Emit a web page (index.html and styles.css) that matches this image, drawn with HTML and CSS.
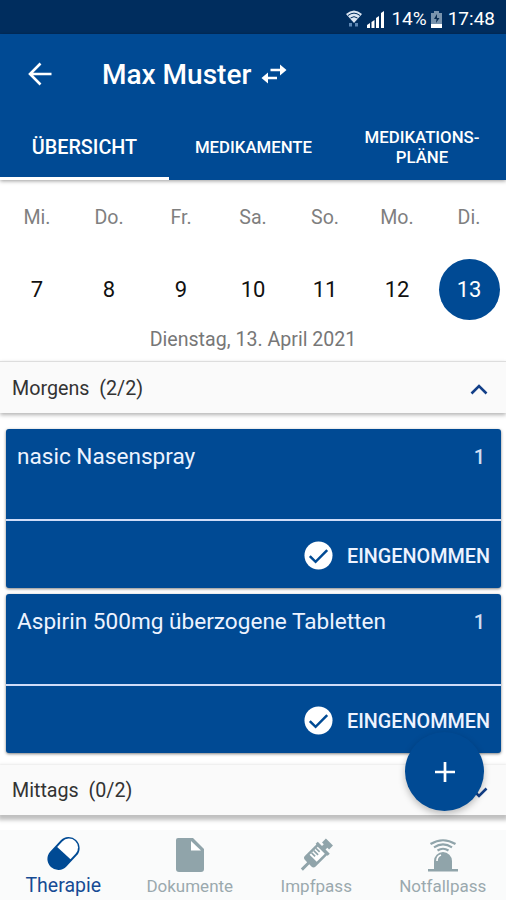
FILE: index.html
```html
<!DOCTYPE html>
<html lang="de">
<head>
<meta charset="utf-8">
<title>Therapie</title>
<link rel="stylesheet" href="styles.css">
</head>
<body>
<div class="app">
  <div class="status">
    <svg class="wifi" width="16" height="19" viewBox="0 0 16 19"><path d="M0 4Q8-3 16 4L8 13Z" fill="#dce6f2"/><path d="M2 5.500Q8 .8 14 5.500M4.500 8Q8 5.300 11.500 8" fill="none" stroke="#002d5e" stroke-width="1"/><path d="M3 13h3v3.500H3zM9 13h3v3.500H9z" fill="#5c86b3"/></svg>
    <svg class="signal" width="18" height="17" viewBox="0 0 18 17"><path d="M0 17v-3l3-2v5zM4.500 17v-6l3-2v8zM9 17V7l3-2v12zM14 17V2l3-2v17z" fill="#fff"/></svg>
    <span class="battery-text">14%</span>
    <svg class="battery" width="11" height="17" viewBox="0 0 11 17"><path d="M3 0h5v2h3v15H0V2h3z" fill="#7893ad"/><path d="M0 13h11v4H0z" fill="#fff"/><path d="M6 3 3 8h2.500L5 12l3.500-5H6z" fill="#082b50"/></svg>
    <span class="clock">17:48</span>
  </div>
  <header class="header">
    <div class="bar">
      <svg class="back" width="24" height="24" viewBox="0 0 24 24"><path d="M23.500 12H2M12.500 1.500 2 12l10.500 10.500" fill="none" stroke="#fff" stroke-width="2.600"/></svg>
      <h1>Max Muster</h1>
      <svg class="swap" width="26" height="20" viewBox="0 0 26 20"><path d="M9.500 6H20M16 14H6" fill="none" stroke="#fff" stroke-width="2.500"/><path d="m19 .5 6.500 5.500-6.500 5.500zM7 8.500v11L.500 14z" fill="#fff"/></svg>
    </div>
    <nav class="tabs">
      <div class="tab active"><span>ÜBERSICHT</span></div>
      <div class="tab"><span>MEDIKAMENTE</span></div>
      <div class="tab"><span>MEDIKATIONS-<br>PLÄNE</span></div>
    </nav>
  </header>
  <section class="calendar">
    <div class="week names"><span>Mi.</span><span>Do.</span><span>Fr.</span><span>Sa.</span><span>So.</span><span>Mo.</span><span>Di.</span></div>
    <div class="week days"><span>7</span><span>8</span><span>9</span><span>10</span><span>11</span><span>12</span><span class="today">13</span></div>
    <div class="date"><span>Dienstag, 13. April 2021</span></div>
  </section>
  <div class="group morning">
    <span>Morgens&nbsp; (2/2)</span>
    <svg width="18" height="12" viewBox="0 0 18 12"><path d="m1.500 11.500 7.500-7.500 7.500 7.500" fill="none" stroke="#123f88" stroke-width="2.600"/></svg>
  </div>
  <main class="cards">
    <article class="card">
      <div class="med"><span>nasic Nasenspray</span><span class="amount">1</span></div>
      <div class="taken"><svg width="29" height="29" viewBox="0 0 30 30"><circle cx="15" cy="14" r="14.500" fill="#fff"/><path d="m6 14.500 6 6L24 8.500" fill="none" stroke="#004a94" stroke-width="2.600"/></svg><span>EINGENOMMEN</span></div>
    </article>
    <article class="card">
      <div class="med"><span>Aspirin 500mg überzogene Tabletten</span><span class="amount">1</span></div>
      <div class="taken"><svg width="29" height="29" viewBox="0 0 30 30"><circle cx="15" cy="14" r="14.500" fill="#fff"/><path d="m6 14.500 6 6L24 8.500" fill="none" stroke="#004a94" stroke-width="2.600"/></svg><span>EINGENOMMEN</span></div>
    </article>
  </main>
  <div class="group noon">
    <span>Mittags&nbsp; (0/2)</span>
    <svg width="18" height="12" viewBox="0 0 18 12"><path d="m1.500 3.500 7.500 7.500 7.500-7.500" fill="none" stroke="#123f88" stroke-width="2.600"/></svg>
    <div class="fab"><svg width="22" height="22" viewBox="0 0 22 22"><path d="M11 1v20M1 11h20" stroke="#fff" stroke-width="2.700"/></svg></div>
  </div>
  <nav class="bottom">
    <div class="item on">
      <svg width="36" height="36" viewBox="0 0 36 36"><g transform="translate(.5 -1.500) rotate(-47 18 18)"><rect x="-.5" y="7" width="37" height="22" rx="11" fill="#004a94"/><path d="M18.500 8.900h7.500a9.100 9.100 0 0 1 0 18.200h-7.500z" fill="#fff"/></g></svg>
      <span>Therapie</span>
    </div>
    <div class="item">
      <svg width="36" height="36" viewBox="0 0 36 36"><path d="M6 1h15l11 11v20a3 3 0 0 1-3 3H7a3 3 0 0 1-3-3V3a2 2 0 0 1 2-2z" fill="#90a4aa"/><path d="M19 4v9.500h10z" fill="#fff"/></svg>
      <span>Dokumente</span>
    </div>
    <div class="item">
      <svg width="36" height="36" viewBox="0 0 36 36"><g transform="translate(0 .5) rotate(45 18 18)" fill="#90a4aa"><path d="M13-1h10v5.500h-2.500V7h6v3H25.500V26q0 3-3 3h-3v9h-3v-9H13.500q-3 0-3-3V10H9.500V7h6V4.500H13z"/><path d="M13 10.500h10v11.500H13z" fill="#fff"/><path d="M13 12h5v1.700h-5zM13 15.200h6v1.700h-6zM13 18.400h5v1.700h-5z"/></g></svg>
      <span>Impfpass</span>
    </div>
    <div class="item">
      <svg width="36" height="36" viewBox="0 0 36 36"><path d="M9 32V24a9 9 0 0 1 18 0v8h6v2.500H3V32z" fill="#90a4aa"/><path d="M12 24a6 6 0 0 1 4-6" stroke="#fff" stroke-width="1.600" fill="none"/><path d="M5.500 7Q18-.5 30.500 7M9 10.300Q18 4.500 27 10.300M12.500 13.500Q18 10 23.500 13.500" fill="none" stroke="#90a4aa" stroke-width="2.200"/></svg>
      <span>Notfallpass</span>
    </div>
  </nav>
</div>
</body>
</html>
```
FILE: styles.css
```css
* { box-sizing: border-box; }
body { margin: 0; background: #fff; font-family: Roboto, "Liberation Sans", sans-serif; }
.app { width: 506px; height: 900px; display: flex; flex-direction: column; overflow: hidden; white-space: nowrap; }
svg { display: block; flex: none; overflow: visible; }
.status { height: 34px; background: #002d5e; color: #fff; display: flex; align-items: center; justify-content: flex-end; padding: 4px 11px 0 0; font-size: 19px; line-height: 28px; flex: none; }
.wifi { margin-right: 5px; }
.signal { margin-right: 6px; }
.battery { margin: 0 6px 0 4px; }
.header { height: 146px; background: #004a94; color: #fff; flex: none; display: flex; flex-direction: column; box-shadow: 0 1px 4px rgba(0,0,0,.4); }
.bar { height: 80px; display: flex; align-items: center; padding-left: 28px; }
h1 { margin: 1px 10px 0 50px; font-size: 28px; font-weight: 500; line-height: 36px; }
.tabs { height: 66px; display: grid; grid-template-columns: 169px 169px 168px; font-weight: 500; text-align: center; }
.tab { display: flex; align-items: center; justify-content: center; padding-top: 3px; border-bottom: 3px solid transparent; font-size: 16.800px; line-height: 20px; }
.tab.active { border-color: #fff; font-size: 19.800px; padding-top: 5px; }
.calendar { height: 181px; flex: none; }
.week { display: grid; grid-template-columns: repeat(7, 72px); padding-left: 1px; text-align: center; justify-items: center; align-items: center; }
.names { height: 74px; color: #7f7f7f; font-size: 19.600px; padding-top: 1px; }
.days { height: 70px; color: #111; font-size: 22px; }
.days .today { width: 61px; height: 61px; line-height: 61px; border-radius: 50%; background: #004a94; color: #fff; }
.date { height: 32px; line-height: 32px; color: #777; text-align: center; font-size: 19.600px; }
.group { background: #fafafa; display: flex; justify-content: space-between; align-items: center; padding: 1px 18px 0 12px; color: #333; font-size: 19.700px; flex: none; position: relative; }
.morning { height: 52px; border-top: 1px solid #ddd; box-shadow: 0 2px 4px rgba(0,0,0,.3); }
.cards { padding: 16px 5px 0 6px; display: flex; flex-direction: column; gap: 6px; flex: none; }
.card { height: 159px; background: #004a94; color: #edf3ff; border-radius: 3px; box-shadow: 0 1px 3px rgba(0,0,0,.5); }
.med { height: 92px; border-bottom: 2px solid #cfdcf8; display: flex; justify-content: space-between; padding: 13px 16px 0 11px; font-size: 22.600px; line-height: 30px; }
.amount { font-size: 20px; font-weight: 500; color: #cfddf2; }
.taken { height: 67px; display: flex; align-items: center; justify-content: flex-end; gap: 14px; padding: 4px 11px 0 0; font-size: 19.800px; font-weight: 500; }
.noon { height: 50px; margin-top: 12px; box-shadow: 0 3px 4px 2px rgba(0,0,0,.25); }
.fab { position: absolute; left: 405px; top: -33px; width: 79px; height: 79px; border-radius: 50%; background: #004a94; box-shadow: 0 3px 7px rgba(0,0,0,.25); display: flex; align-items: center; justify-content: center; }
.bottom { height: 70px; margin-top: auto; background: #fafbfb; display: grid; grid-template-columns: repeat(4, 1fr); flex: none; }
.item { display: flex; flex-direction: column; align-items: center; color: #9aa9ae; font-size: 17px; padding-top: 7px; }
.item span { line-height: 24px; margin-top: 1px; }
.on { color: #164b94; }
.on span { font-size: 19.500px; }
```
